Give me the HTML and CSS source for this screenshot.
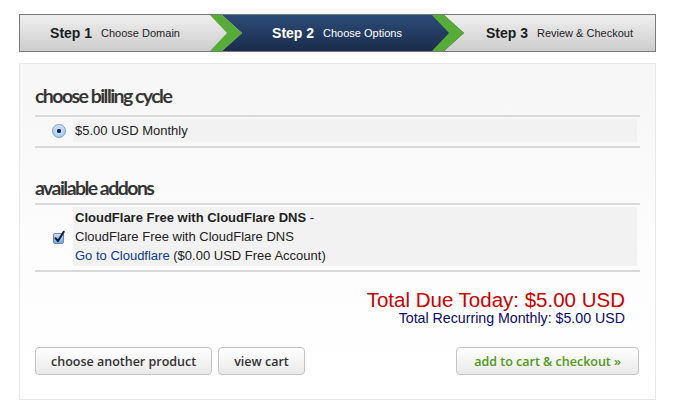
FILE: index.html
```html
<!DOCTYPE html>
<html>
<head>
<meta charset="utf-8">
<link rel="stylesheet" href="styles.css">
</head>
<body>
<div class="steps">
  <div class="step step-light"><b>Step 1</b><span>Choose Domain</span></div>
  <svg class="chev" width="32" height="36" viewBox="0 0 32 36" preserveAspectRatio="none">
    <defs>
      <linearGradient id="g1" x1="0" y1="0" x2="0" y2="1"><stop offset="0" stop-color="#efefef"/><stop offset="1" stop-color="#cdcdcd"/></linearGradient>
      <linearGradient id="b1" x1="0" y1="0" x2="0" y2="1"><stop offset="0" stop-color="#2c4b78"/><stop offset="1" stop-color="#1a2c4b"/></linearGradient>
    </defs>
    <rect x="0" y="0" width="32" height="36" fill="url(#g1)"/>
    <polygon points="12,0 32,0 32,36 12,36 32,18" fill="url(#b1)"/>
    <polygon points="0,0 12,0 32,18 12,36 0,36 17,18" fill="#56ac36"/>
  </svg>
  <div class="step step-dark"><b>Step 2</b><span>Choose Options</span></div>
  <svg class="chev" width="32" height="36" viewBox="0 0 32 36" preserveAspectRatio="none">
    <defs>
      <linearGradient id="g2" x1="0" y1="0" x2="0" y2="1"><stop offset="0" stop-color="#efefef"/><stop offset="1" stop-color="#cdcdcd"/></linearGradient>
      <linearGradient id="b2" x1="0" y1="0" x2="0" y2="1"><stop offset="0" stop-color="#2c4b78"/><stop offset="1" stop-color="#1a2c4b"/></linearGradient>
    </defs>
    <rect x="0" y="0" width="32" height="36" fill="url(#b2)"/>
    <polygon points="12,0 32,0 32,36 12,36 32,18" fill="url(#g2)"/>
    <polygon points="0,0 12,0 32,18 12,36 0,36 17,18" fill="#56ac36"/>
  </svg>
  <div class="step step-light step-last"><b>Step 3</b><span>Review &amp; Checkout</span></div>
</div>

<div class="panel">
  <h2 class="heading heading-first">choose billing cycle</h2>
  <div class="list">
    <div class="row">
      <div class="ctl"><span class="radio"></span></div>
      <div class="cell cell-single">$5.00 USD Monthly</div>
    </div>
  </div>

  <h2 class="heading heading-second">available addons</h2>
  <div class="list">
    <div class="row">
      <div class="ctl ctl-check">
        <svg class="check" width="14" height="14" viewBox="0 0 14 14">
          <defs>
            <linearGradient id="cb" x1="0" y1="0" x2="0" y2="1"><stop offset="0" stop-color="#cfe3f8"/><stop offset="1" stop-color="#6ea4dc"/></linearGradient>
          </defs>
          <rect x="1.5" y="3.5" width="10" height="10" rx="1.5" fill="url(#cb)" stroke="#6b88ad"/>
          <path d="M3.5 8.2 L6 11 L11.8 1.8" fill="none" stroke="#0d1a3a" stroke-width="2" stroke-linecap="round" stroke-linejoin="round"/>
        </svg>
      </div>
      <div class="cell cell-multi">
        <div><b>CloudFlare Free with CloudFlare DNS</b> -</div>
        <div>CloudFlare Free with CloudFlare DNS</div>
        <div><a href="#" class="link">Go to Cloudflare</a> ($0.00 USD Free Account)</div>
      </div>
    </div>
  </div>

  <div class="totals">
    <div class="due">Total Due Today: $5.00 USD</div>
    <div class="recurring">Total Recurring Monthly: $5.00 USD</div>
  </div>

  <div class="actions">
    <div class="left-actions">
      <button class="btn">choose another product</button>
      <button class="btn">view cart</button>
    </div>
    <button class="btn btn-go">add to cart &amp; checkout &raquo;</button>
  </div>
</div>
</body>
</html>
```

FILE: styles.css
```css
html, body {
  margin: 0;
  padding: 0;
  background: #ffffff;
}
body {
  font-family: "Liberation Sans", Arial, sans-serif;
  color: #222;
}
.steps {
  display: flex;
  width: 635px;
  height: 36px;
  margin: 14px 0 0 19px;
  border: 1px solid #7a7a7a;
}
.chev {
  display: block;
  flex: 0 0 32px;
}
.step {
  flex: 0 0 190px;
  display: flex;
  align-items: center;
  justify-content: center;
  gap: 9px;
  white-space: nowrap;
}
.step-last {
  flex: 1 1 auto;
}
.step b {
  font-size: 14px;
  font-weight: bold;
}
.step span {
  font-size: 11px;
}
.step-light {
  background: linear-gradient(#efefef, #cdcdcd);
  color: #1e1e1e;
}
.step-dark {
  background: linear-gradient(#2c4b78, #1a2c4b);
  color: #ffffff;
}
.panel {
  width: 605px;
  margin: 11px 0 0 19px;
  padding: 0 15px 24px 15px;
  border: 1px solid #e8e8e8;
  background: linear-gradient(#f6f6f6, #fdfdfd 60%, #ffffff);
}
.heading {
  font-family: "Lato", sans-serif;
  font-weight: 700;
  font-size: 19.5px;
  line-height: 24px;
  letter-spacing: -1.55px;
  color: #363636;
  margin: 0;
}
.heading-first {
  margin-top: 20px;
  margin-bottom: 7px;
}
.heading-second {
  margin-top: 28px;
  margin-bottom: 3px;
}
.list {
  border-top: 2px solid #d9d9d9;
  border-bottom: 2px solid #d9d9d9;
  padding: 2px 3px 4px 0;
}
.row {
  display: flex;
  align-items: center;
}
.ctl {
  flex: 0 0 38px;
  display: flex;
  align-items: center;
  padding-left: 17px;
  box-sizing: border-box;
}
.radio {
  display: block;
  width: 12px;
  height: 12px;
  border-radius: 50%;
  border: 1px solid #7f9cc0;
  background: radial-gradient(circle at 50% 50%, #1b2440 0, #1b2440 1.8px, #c4defa 2.4px, #86b8ea 100%);
  box-shadow: inset 0 1px 1px rgba(255,255,255,0.8);
}
.ctl-check {
  padding-left: 17px;
}
.check {
  display: block;
}
.cell {
  flex: 1 1 auto;
  background: #f2f2f2;
  font-size: 13px;
  padding: 0 2px;
}
.cell-single {
  line-height: 23px;
}
.cell-multi {
  line-height: 19px;
  padding-top: 1px;
  padding-bottom: 1px;
}
.link {
  color: #0b3d91;
  text-decoration: none;
}
.totals {
  text-align: right;
  padding-right: 15px;
  margin-top: 16px;
}
.due {
  font-size: 20.5px;
  line-height: 23px;
  color: #cc0000;
}
.recurring {
  font-size: 14.2px;
  line-height: 15px;
  color: #0a0a6e;
}
.actions {
  display: flex;
  justify-content: space-between;
  margin-top: 21px;
}
.left-actions {
  display: flex;
  gap: 6px;
}
.btn {
  font-family: "Open Sans", sans-serif;
  font-weight: 600;
  font-size: 12.5px;
  height: 28px;
  padding: 0 15px;
  border: 1px solid #c4c4c4;
  border-radius: 4px;
  background: linear-gradient(#ffffff, #e9e9e9);
  color: #333;
  cursor: pointer;
}
.btn-go {
  color: #4f9a14;
  margin-right: 1px;
  padding: 0 17px;
}
```
